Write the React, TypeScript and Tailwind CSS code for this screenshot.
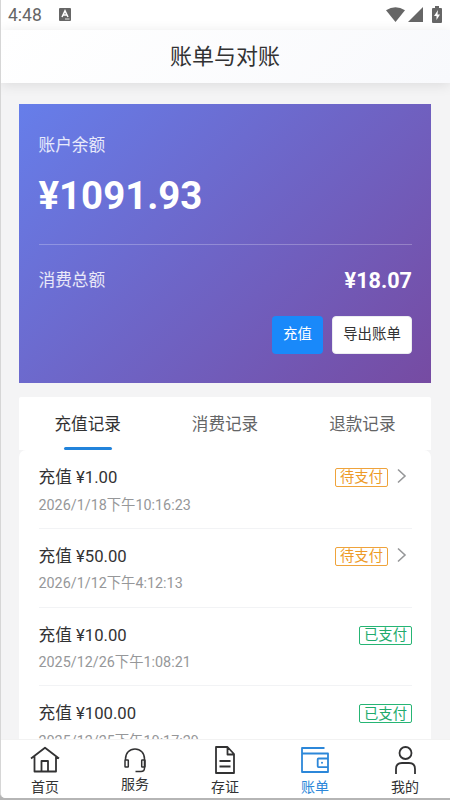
import React from 'react';

type Status = 'pending' | 'paid';
interface RecordItem { amount: string; time: string; status: Status }

const records: RecordItem[] = [
  { amount: '¥1.00', time: '2026/1/18下午10:16:23', status: 'pending' },
  { amount: '¥50.00', time: '2026/1/12下午4:12:13', status: 'pending' },
  { amount: '¥10.00', time: '2025/12/26下午1:08:21', status: 'paid' },
  { amount: '¥100.00', time: '2025/12/25下午10:17:29', status: 'paid' },
];

function StatusBar() {
  return (
    <div className="flex h-[30px] shrink-0 items-center bg-white pl-[7px] pr-[7px] text-[#666]">
      <span className="w-[51px] pt-[2px] text-[17.5px] leading-none">4:48</span>
      <svg width="12" height="13" viewBox="0 0 12 13" className="-mt-px">
        <rect width="12" height="13" rx="1" fill="#666" />
        <path d="M3 9 6 2.8 9 9M4.1 7h3.8" fill="none" stroke="#fff" strokeWidth="1.5" />
        <path d="M6 11h4.5" stroke="#fff" strokeWidth=".8" />
      </svg>
      <div className="-mt-[2px] ml-auto flex items-center">
        <svg width="19" height="15" viewBox="0 0 19 15" className="-ml-[2px]"><path d="M0 3.3Q9.5-3 19 3.3L9.5 15Z" fill="#666" /></svg>
        <svg width="15" height="15" viewBox="0 0 15 15" className="ml-[3px]"><path d="M15 0v15H0Z" fill="#666" /></svg>
        <svg width="10" height="17" viewBox="0 0 10 17" className="ml-[9px] mr-[1px]">
          <path d="M3 0h4v2h2q1 0 1 1v13q0 1-1 1H1q-1 0-1-1V3q0-1 1-1h2Z" fill="#666" />
          <path d="M6 4 2 10h2.5v4L8 8.5H5.5Z" fill="#fff" />
        </svg>
      </div>
    </div>
  );
}

function BalanceCard() {
  return (
    <section className="mx-[19px] mt-[21px] h-[279px] shrink-0 bg-[linear-gradient(135deg,#667eea_0%,#764ba2_100%)] pl-[19.5px] pr-[19px] pt-[31px] text-white">
      <div className="text-[16.7px] leading-[22px] text-white/85">账户余额</div>
      <div className="mt-[15px] h-12 text-[38.4px] font-bold leading-12">¥1091.93</div>
      <div className="mt-6 h-px bg-white/25" />
      <div className="mt-6 flex h-6 items-center justify-between">
        <span className="text-[16.7px] text-white/85">消费总额</span>
        <span className="text-[21.6px] font-bold leading-6">¥18.07</span>
      </div>
      <div className="mt-[23px] flex justify-end gap-[9px] text-[14.4px]">
        <button className="h-[38px] w-[51px] rounded-[4px] bg-[#1989fa]">充值</button>
        <button className="h-[38px] w-20 rounded-[4px] border border-[#ebedf0] bg-white text-[#323233]">导出账单</button>
      </div>
    </section>
  );
}

function Tabs() {
  return (
    <div className="mx-[19px] mt-3.5 grid h-[53px] shrink-0 grid-cols-3 rounded-t-[2px] bg-white text-center text-[16.6px] text-[#646566]">
      <div className="flex flex-col items-center text-[#323233]">
        <span className="h-[50px] leading-[55px]">充值记录</span>
        <span className="h-[3px] w-12 rounded-full bg-[#2283db]" />
      </div>
      <span className="leading-[55px]">消费记录</span>
      <span className="leading-[55px]">退款记录</span>
    </div>
  );
}

function Row({ item }: { item: RecordItem }) {
  const pending = item.status === 'pending';
  return (
    <div className="ml-[19.5px] mr-[19px] h-[78.8px] shrink-0 border-b border-[#f2f3f5] pt-[14px]">
      <div className="flex h-[27px] items-center">
        <span className="text-[16.7px] text-[#323233]">充值 {item.amount}</span>
        <span className={`ml-auto flex h-[19px] w-[53px] items-center justify-center rounded-[2px] border text-[14.3px] leading-none ${pending ? 'border-[#efa33b] text-[#ed9a27]' : 'border-[#26b574] text-[#22aa6c]'}`}>
          {pending ? '待支付' : '已支付'}
        </span>
        {pending && (
          <svg width="10" height="16" viewBox="0 0 10 16" className="ml-[9px] mr-[5px] -mt-[3px]"><path d="m1 1.5 7 6.5-7 6.5" fill="none" stroke="#969799" strokeWidth="1.6" /></svg>
        )}
      </div>
      <div className="mt-[4.5px] text-[14.35px] leading-5 text-[#969799]">{item.time}</div>
    </div>
  );
}

const icons: React.ReactNode[] = [
  <svg width="30" height="28" viewBox="0 0 30 28" fill="none" stroke="currentColor" strokeWidth="1.8"><path d="M1 12.5 15 1.7 29 12.5M4.5 10v15.5h21.5V10M11.5 25V15h6.5v10" strokeLinejoin="round" /></svg>,
  <svg width="22" height="25" viewBox="0 0 22 25" fill="none" stroke="currentColor" strokeWidth="1.5"><path d="M1.5 12v-1C1.5 5 5.5 1 11 1s9.5 4 9.5 10v9q0 3.5-3.5 3.5h-5.5" /><rect x="1" y="12" width="3.3" height="7" rx=".5" /><rect x="17.7" y="12" width="3.3" height="7" rx=".5" /></svg>,
  <svg width="20" height="28" viewBox="0 0 20 28" fill="none" stroke="currentColor" strokeWidth="1.8" strokeLinejoin="round"><path d="M1 1h11.5l6.5 7V27H1ZM12.5 1v7.5H19M4.5 15H15.5M4.5 20.5H15.5" /></svg>,
  <svg width="28" height="26" viewBox="0 0 28 26" fill="none" stroke="currentColor" strokeWidth="1.8" strokeLinejoin="round"><path d="M23.5 1H1v24h26V6.5H1M27 11.5h-9.5q-.8 0-.8.8v7q0 .8.8.8H27" /><circle cx="21" cy="15.7" r="1" fill="currentColor" stroke="none" /></svg>,
  <svg width="21" height="28" viewBox="0 0 21 28" fill="none" stroke="currentColor" strokeWidth="1.8"><circle cx="10.5" cy="7" r="6" /><path d="M1 28v-5q0-6 6-6h7q6 0 6 6v5" /></svg>,
];
const navItems = ['首页', '服务', '存证', '账单', '我的'];

function BottomNav() {
  return (
    <nav className="-ml-px grid h-[59px] shrink-0 grid-cols-5 border-t border-[#f2f2f2] text-[14px] text-[#323233]">
      {navItems.map((name, i) => (
        <div key={name} className={`flex flex-col items-center ${i === 3 ? 'text-[#2c87d9]' : ''}`}>
          <span className={`flex items-center justify-center ${i === 1 ? 'mt-[5px] h-[31px]' : 'mt-[5px] h-[29px]'}`}>{icons[i]}</span>
          <span className={`leading-5 ${i === 1 ? '-mt-[2px]' : 'mt-[3px]'}`}>{name}</span>
        </div>
      ))}
    </nav>
  );
}

export default function App() {
  return (
    <div className="h-[800px] w-[450px] overflow-hidden bg-[#b5b5b5] pb-[2px] font-['Roboto','Noto_Sans_CJK_SC',sans-serif]">
      <div className="flex h-[798px] flex-col overflow-hidden rounded-bl-[5px] border-l border-[#d6d6d6] bg-[#f4f4f5]">
        <StatusBar />
        <header className="z-10 flex h-[53px] shrink-0 items-center justify-center bg-[linear-gradient(135deg,#ffffff,#f8f9fc)] pr-px text-[22px] text-[#323233] shadow-[0_2px_12px_rgba(0,0,0,0.10)]">账单与对账</header>
        <div className="-ml-px flex min-h-0 flex-1 flex-col overflow-hidden">
          <BalanceCard />
          <Tabs />
          <div className="mx-[19px] flex min-h-0 flex-1 flex-col overflow-hidden rounded-t-[7px] bg-white">
            {records.map((item) => <Row key={item.time} item={item} />)}
          </div>
        </div>
        <div className="shrink-0 bg-white"><BottomNav /></div>
      </div>
    </div>
  );
}
